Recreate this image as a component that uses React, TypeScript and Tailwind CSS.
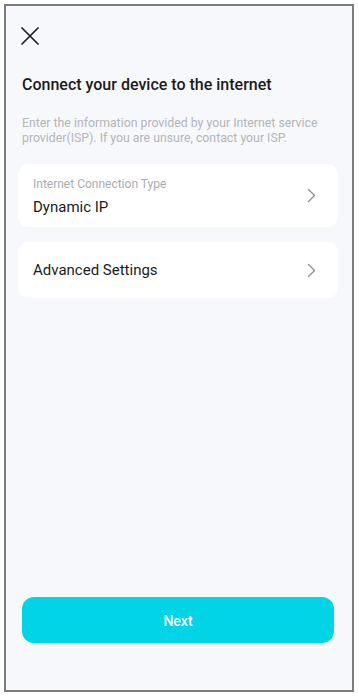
function Chevron() {
  return (
    <svg width="9" height="15" viewBox="0 0 9 15" fill="none" className="shrink-0">
      <polyline points="1.5,1.5 7.5,7.5 1.5,13.5" stroke="#8c8c8c" strokeWidth="1.3" strokeLinecap="round" strokeLinejoin="round" />
    </svg>
  );
}

function SettingRow({ label, value, tall }: { label?: string; value: string; tall?: boolean }) {
  return (
    <div
      className={`ml-[12px] mr-[14px] flex items-center justify-between rounded-[10px] bg-white pl-[15px] pr-[22px] ${
        tall ? 'h-[63px]' : 'h-[56px]'
      }`}
    >
      <div className={`flex flex-col ${label ? 'pt-[2px]' : ''}`}>
        {label && <span className="text-[12px] leading-[14px] text-[#a9abb0]">{label}</span>}
        <span className={`text-[15px] leading-[18px] text-[#1b1b1b] ${label ? 'mt-[7px]' : ''}`}>{value}</span>
      </div>
      <Chevron />
    </div>
  );
}

export default function App() {
  return (
    <div className="h-[697px] w-[359px] bg-white p-[4px]" style={{ fontFamily: 'Roboto, "Noto Sans", sans-serif' }}>
      <div className="flex h-[688px] w-[350px] flex-col border-2 border-[#7c7c7c] bg-[#f7f8fc]">
        <svg width="18" height="18" viewBox="0 0 18 18" fill="none" className="ml-[15px] mt-[21px]">
          <path d="M1 1L17 17M17 1L1 17" stroke="#1f1f1f" strokeWidth="1.7" strokeLinecap="round" />
        </svg>
        <h1 className="ml-[16px] mt-[30px] text-[16px] font-medium leading-[20px] text-[#1b1b1b]">
          Connect your device to the internet
        </h1>
        <p className="ml-[16px] mr-[14px] mt-[21px] text-[12.3px] leading-[15px] text-[#b3b5ba]">
          Enter the information provided by your Internet service provider(ISP). If you are unsure, contact your ISP.
        </p>
        <div className="mt-[18px] flex flex-col gap-[15px]">
          <SettingRow label="Internet Connection Type" value="Dynamic IP" tall />
          <SettingRow value="Advanced Settings" />
        </div>
        <div className="flex-1" />
        <button className="mb-[47px] ml-[16px] mr-[18px] h-[46px] shrink-0 rounded-[12px] bg-[#00d4e6] pt-[2px] text-[14px] font-medium text-white">
          Next
        </button>
      </div>
    </div>
  );
}
